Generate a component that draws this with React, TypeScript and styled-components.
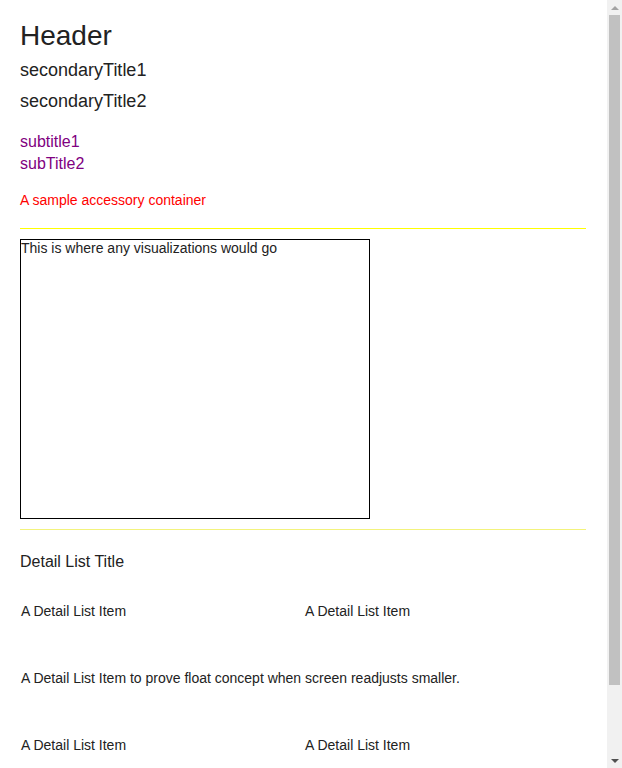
import React from "react";
import styled, { createGlobalStyle } from "styled-components";

const GlobalStyle = createGlobalStyle`
  html, body {
    margin: 0;
    padding: 0;
    background: #ffffff;
  }
  body {
    font-family: "Liberation Sans", Arial, sans-serif;
    color: #222222;
  }
`;

const Page = styled.div`
  max-width: 566px;
  padding: 20px 21px 80px 20px;
`;

const Header = styled.h1`
  margin: 0;
  font-size: 28px;
  line-height: 32px;
  font-weight: normal;
`;

const SecondaryTitle = styled.h2<{ $first?: boolean }>`
  margin: ${({ $first }) => ($first ? "8px 0 0" : "10px 0 0")};
  font-size: 18px;
  line-height: 21px;
  font-weight: normal;
`;

const SubtitleGroup = styled.div`
  margin-top: 19px;
  color: #800080;
  font-size: 16px;
  line-height: 22px;
`;

const Accessory = styled.div`
  margin-top: 17px;
  color: #ff0000;
  font-size: 14px;
  line-height: 16px;
`;

const Divider = styled.div<{ $faded?: boolean }>`
  margin-top: ${({ $faded }) => ($faded ? "10px" : "20px")};
  height: 1px;
  background: ${({ $faded }) => ($faded ? "#f3f37c" : "#ffff00")};
`;

const Visualization = styled.div`
  margin-top: 10px;
  width: 348px;
  height: 278px;
  border: 1px solid #000000;
  font-size: 14px;
  line-height: 16px;
`;

const DetailList = styled.section`
  margin-top: 23px;
`;

const DetailTitle = styled.h3`
  margin: 0;
  font-size: 16px;
  line-height: 18px;
  font-weight: normal;
`;

const DetailGrid = styled.div`
  margin-top: 6px;
  display: grid;
  grid-template-columns: 284px 1fr;
`;

const DetailItem = styled.div<{ $wide?: boolean }>`
  grid-column: ${({ $wide }) => ($wide ? "1 / -1" : "auto")};
  padding: 26px 1px 25px;
  font-size: 14px;
  line-height: 16px;
`;

// mimic of the browser's vertical scrollbar seen in the screenshot
const ScrollTrack = styled.div`
  position: fixed;
  top: 0;
  right: 0;
  width: 15px;
  height: 100vh;
  background: #f1f1f1;
  display: flex;
  flex-direction: column;
  align-items: center;
`;

const ScrollArrow = styled.div<{ $down?: boolean }>`
  flex: 0 0 15px;
  width: 15px;
  display: flex;
  align-items: center;
  justify-content: center;
  order: ${({ $down }) => ($down ? 3 : 0)};
  margin-top: ${({ $down }) => ($down ? "auto" : "0")};
  &::after {
    content: "";
    border-left: 4px solid transparent;
    border-right: 4px solid transparent;
    ${({ $down }) =>
      $down ? "border-top: 4px solid #505050;" : "border-bottom: 4px solid #a3a3a3;"}
  }
`;

const ScrollThumb = styled.div`
  order: 1;
  width: 11px;
  height: 670px;
  background: #c1c1c1;
`;

const item = "A Detail List Item";
const longItem = "A Detail List Item to prove float concept when screen readjusts smaller.";

export default function App() {
  return (
    <>
      <GlobalStyle />
      <Page>
        <Header>Header</Header>
        <SecondaryTitle $first>secondaryTitle1</SecondaryTitle>
        <SecondaryTitle>secondaryTitle2</SecondaryTitle>
        <SubtitleGroup>
          <div>subtitle1</div>
          <div>subTitle2</div>
        </SubtitleGroup>
        <Accessory>A sample accessory container</Accessory>
        <Divider />
        <Visualization>This is where any visualizations would go</Visualization>
        <Divider $faded />
        <DetailList>
          <DetailTitle>Detail List Title</DetailTitle>
          <DetailGrid>
            <DetailItem>{item}</DetailItem>
            <DetailItem>{item}</DetailItem>
            <DetailItem $wide>{longItem}</DetailItem>
            <DetailItem>{item}</DetailItem>
            <DetailItem>{item}</DetailItem>
          </DetailGrid>
        </DetailList>
      </Page>
      <ScrollTrack>
        <ScrollArrow />
        <ScrollThumb />
        <ScrollArrow $down />
      </ScrollTrack>
    </>
  );
}
